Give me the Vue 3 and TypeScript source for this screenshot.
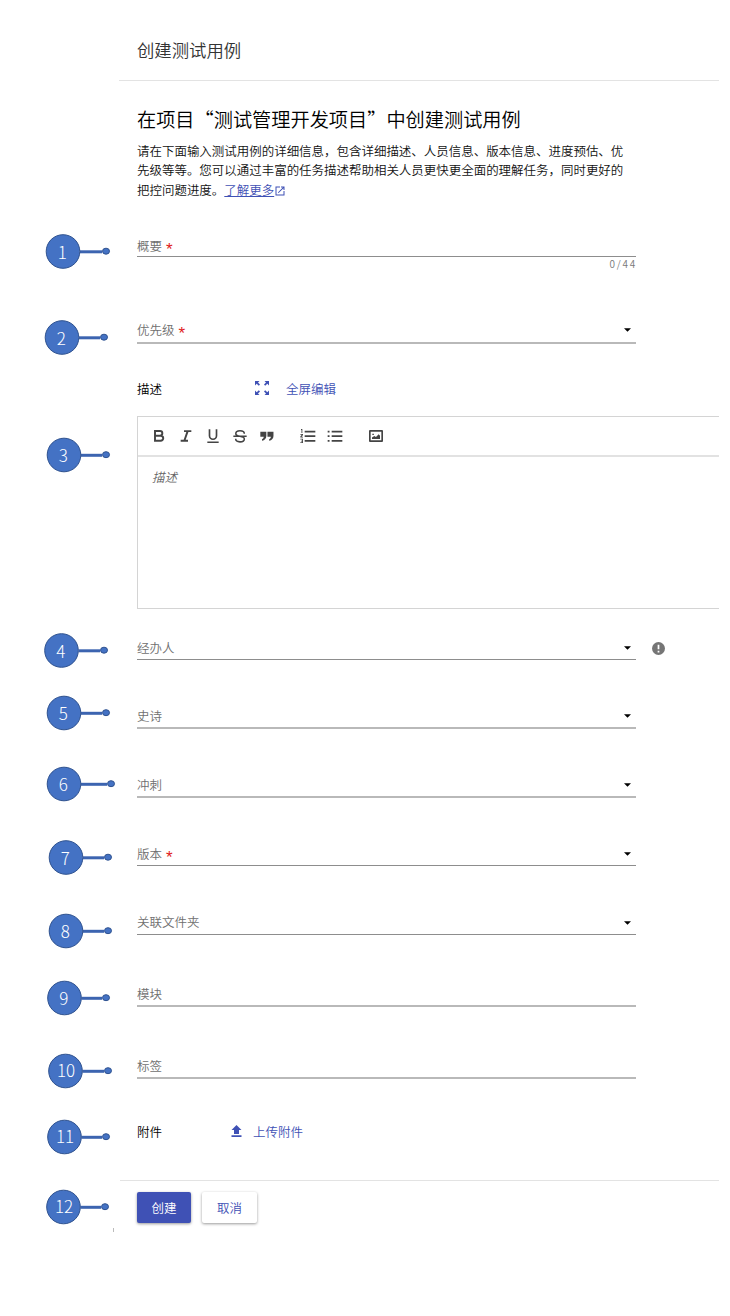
<script setup lang="ts">
interface Field {
  label: string
  required?: boolean
  select?: boolean
  info?: boolean
  counter?: string
  soft?: boolean
  name: string
}
interface Callout {
  n: number
  cx: number
  cy: number
  dot: number
}

const basics: Field[] = [
  { label: '概要', required: true, counter: '0/44', name: 'summary' },
  { label: '优先级', required: true, select: true, soft: true, name: 'priority' },
]
const details: Field[] = [
  { label: '经办人', select: true, info: true, name: 'assignee' },
  { label: '史诗', select: true, soft: true, name: 'epic' },
  { label: '冲刺', select: true, soft: true, name: 'sprint' },
  { label: '版本', required: true, select: true, name: 'version' },
  { label: '关联文件夹', select: true, name: 'folder' },
  { label: '模块', soft: true, name: 'module' },
  { label: '标签', soft: true, name: 'tag' },
]
const callouts: Callout[] = [
  { n: 1, cx: 63, cy: 251.5, dot: 106 },
  { n: 2, cx: 62, cy: 337.5, dot: 104 },
  { n: 3, cx: 64, cy: 455, dot: 106 },
  { n: 4, cx: 61.5, cy: 650.5, dot: 104 },
  { n: 5, cx: 64, cy: 713, dot: 106 },
  { n: 6, cx: 64, cy: 784, dot: 111 },
  { n: 7, cx: 66, cy: 857.5, dot: 108 },
  { n: 8, cx: 66, cy: 931, dot: 108 },
  { n: 9, cx: 64.5, cy: 998, dot: 106 },
  { n: 10, cx: 65.5, cy: 1071, dot: 108 },
  { n: 11, cx: 64.5, cy: 1137, dot: 106 },
  { n: 12, cx: 63.5, cy: 1207, dot: 105 },
]
const tools: { name: string; d: string }[] = [
  { name: 'bold', d: 'M6 4.500h7.500a3.500 3.500 0 0 1 0 7H6zM6 11.500h8.500a3.800 3.800 0 0 1 0 7.700H6z' },
  { name: 'italic', d: 'M9 4.700h11M4 19.200h11M14.500 4.700l-5 14.500' },
]
</script>

<template>
  <div class="page" lang="zh-CN">
    <header class="top"><h1>创建测试用例</h1></header>

    <section class="intro">
      <h2>在项目“测试管理开发项目”中创建测试用例</h2>
      <p>
        请在下面输入测试用例的详细信息，包含详细描述、人员信息、版本信息、进度预估、优<br />先级等等。您可以通过丰富的任务描述帮助相关人员更快更全面的理解任务，同时更好的<br />把控问题进度。<a class="more">了解更多</a><svg class="open" viewBox="0 0 24 24"><path d="M19 19H5V5h7V3H3v18h18v-9h-2zM14 3v2h3.600l-9.800 9.800 1.400 1.400L19 6.400V10h2V3z" /></svg>
      </p>
    </section>

    <div v-for="f in basics" :key="f.name" class="field" :class="[f.name, { soft: f.soft }]">
      <span class="label">{{ f.label }}<b v-if="f.required">*</b></span>
      <svg v-if="f.select" class="caret" viewBox="0 0 8 4"><path d="M0 0h8L4 4z" /></svg>
      <span v-if="f.counter" class="counter">{{ f.counter }}</span>
    </div>

    <div class="desc-head">
      <span class="name">描述</span>
      <svg class="expand" viewBox="0 0 16 16">
        <path d="M1 1h4.500L4 2.500 6 4.500 4.800 5.800 2.700 3.700 1 5.500zM15 1v4.500l-1.700-1.700-2.100 2L10 4.500l2-2L10.500 1zM1 15v-4.500l1.700 1.700 2.100-2L6 11.500l-2 2L5.500 15zM15 15h-4.500l1.500-1.500-2-2 1.200-1.300 2.100 2 1.700-1.700z" />
      </svg>
      <span class="link">全屏编辑</span>
    </div>

    <div class="editor">
      <div class="toolbar">
        <svg v-for="t in tools" :key="t.name" class="tool stroke" viewBox="0 0 24 24"><path :d="t.d" /></svg>
        <svg class="tool" viewBox="0 0 24 24"><path d="M12 18c3.700 0 6.500-2.700 6.500-6.300V2H16v9.700a4 4 0 0 1-8 0V2H5.500v9.700C5.500 15.300 8.300 18 12 18zM3.500 20.400v2h17v-2z" /></svg>
        <svg class="tool thin" viewBox="0 0 24 24"><path d="M2 12.500h20M18.500 8.500c0-2.700-2.500-4.500-6.500-4.500S5.700 5.800 5.700 8.500c0 2 2 3.200 6.300 4 4.500.9 6.500 2 6.500 4 0 2.700-2.500 4.300-6.500 4.300s-6.500-1.800-6.500-4.500" /></svg>
        <svg class="tool" viewBox="0 0 24 24"><path d="M2 5.500h9V12c0 3.600-2.300 6.300-6.500 7.200v-2.500c1.700-.6 2.600-2 2.600-3.700H2zM12.700 5.500h9V12c0 3.600-2.300 6.300-6.500 7.200v-2.500c1.700-.6 2.600-2 2.600-3.700h-5.100z" /></svg>
        <svg class="tool list gap" viewBox="0 0 24 24">
          <path d="M7 4h16v2.600H7zM7 11h16v2.600H7zM7 18h16v2.600H7zM1.500 1.500h2v6H2.200v-4.500h-.7zM.5 9h4v1.500L2.400 13h2.100v1.200h-4v-1.300L2.700 10.200H.5zM.5 16h4v6.500h-4v-1.200h2.700v-1H1.500v-1.200h1.700v-1.800H.5z" />
        </svg>
        <svg class="tool list" viewBox="0 0 24 24">
          <path d="M7 4h16v2.600H7zM7 11h16v2.600H7zM7 18h16v2.600H7zM1 4h2.800v2.600H1zM1 11h2.800v2.600H1zM1 18h2.800v2.600H1z" />
        </svg>
        <svg class="tool gap2" viewBox="0 0 24 24">
          <path fill-rule="evenodd" d="M3 3h18a1.500 1.500 0 0 1 1.500 1.500v15A1.500 1.500 0 0 1 21 21H3a1.500 1.500 0 0 1-1.500-1.500v-15A1.500 1.500 0 0 1 3 3zm1 2.600v12.800h16V5.600zM6 16.500v-2.300l3.500-2.200 2.500 1.500L16 9.500l2 2v5zM6.500 8.500h2.300v2H6.500z" />
        </svg>
      </div>
      <div class="placeholder">描述</div>
    </div>

    <div v-for="f in details" :key="f.name" class="field" :class="[f.name, { soft: f.soft }]">
      <span class="label">{{ f.label }}<b v-if="f.required">*</b></span>
      <svg v-if="f.select" class="caret" viewBox="0 0 8 4"><path d="M0 0h8L4 4z" /></svg>
      <svg v-if="f.info" class="info" viewBox="0 0 12 12">
        <circle cx="6" cy="6" r="6" /><path d="M5.200 2.500h1.600v4.300H5.200zM5.200 8h1.600v1.600H5.200z" />
      </svg>
    </div>

    <div class="attach">
      <span class="name">附件</span>
      <svg class="upload" viewBox="0 0 10 12"><path d="M5 0l5 5H7.500v4h-5V5H0zM0 10.300h10V12H0z" /></svg>
      <span class="link">上传附件</span>
    </div>

    <footer class="actions">
      <button class="primary">创建</button>
      <button class="plain">取消</button>
    </footer>

    <svg class="callouts" viewBox="0 0 130 1316">
      <g v-for="c in callouts" :key="c.n">
        <line :x1="c.cx + 17" :x2="c.dot - 4" :y1="c.cy + 0.3" :y2="c.cy + 0.3" />
        <circle :cx="c.cx" :cy="c.cy" r="16.800" />
        <ellipse :cx="c.dot" :cy="c.cy - 0.3" rx="3.500" ry="3" />
        <text :x="c.n > 9 ? c.cx + 0.5 : c.cx - 0.8" :y="c.n > 9 ? c.cy + 5.5 : c.cy + 7">{{ c.n }}</text>
      </g>
      <path class="tick" d="M113.500 1228v4" />
    </svg>
  </div>
</template>

<style>
body {
  background: #fff;
}
</style>

<style scoped>
* {
  box-sizing: border-box;
}
.page {
  position: relative;
  width: 730px;
  height: 1316px;
  overflow: hidden;
  padding-right: 11px;
  display: flex;
  flex-direction: column;
  font-family: 'Noto Sans CJK SC', sans-serif;
  font-weight: 350;
  font-size: 12.5px;
  color: #111;
}
.top {
  height: 81px;
  margin-left: 119px;
  padding: 37px 0 0 18px;
  border-bottom: 1px solid #e3e3e3;
}
h1 {
  margin: 0;
  font-size: 17.350px;
  line-height: 26px;
  font-weight: 350;
  color: #333;
}
.intro {
  height: 143px;
  padding: 24px 0 0 137px;
}
h2 {
  margin: 0;
  font-size: 19.200px;
  line-height: 28px;
  font-weight: 350;
  color: #000;
  white-space: nowrap;
}
p {
  margin: 9px 0 0;
  font-size: 12.480px;
  line-height: 19.300px;
  white-space: nowrap;
}
.more {
  color: #3f51b5;
  text-decoration: underline;
  text-underline-offset: 1px;
}
.open {
  width: 12px;
  height: 12px;
  vertical-align: -2.500px;
  fill: #3f51b5;
}
.field {
  position: relative;
  display: flex;
  align-items: flex-end;
  justify-content: space-between;
  width: 499px;
  margin-left: 137px;
  padding-bottom: 2px;
  border-bottom: 1px solid #8d8d8d;
  color: #6f6f6f;
}
.field.soft {
  border-bottom: 2px solid #b9b9b9;
}
.label {
  display: flex;
  line-height: 18px;
}
.label b {
  margin: 4px 0 -4px 4px;
  font-family: 'Liberation Sans', sans-serif;
  font-weight: 400;
  font-size: 17px;
  line-height: 18px;
  color: #e01b1b;
}
.caret {
  width: 7px;
  height: 4px;
  margin: 0 5px 7px 0;
}
.counter {
  position: absolute;
  right: -1px;
  top: 100%;
  padding-top: 1px;
  font-size: 10px;
  line-height: 14px;
  letter-spacing: 1.750px;
  color: #777;
}
.info {
  position: absolute;
  left: 515px;
  bottom: 4px;
  width: 13px;
  height: 13px;
  fill: #757575;
}
.info path {
  fill: #fff;
}
.summary {
  height: 33px;
  padding-bottom: 1px;
}
.priority {
  height: 87px;
}
.priority .label {
  margin-bottom: 1px;
}
.priority .caret {
  margin-bottom: 8px;
}
.desc-head {
  display: flex;
  align-items: flex-start;
  height: 72px;
  padding: 17px 0 0 137px;
  line-height: 56px;
}
.name {
  color: #000;
}
.expand {
  width: 16px;
  height: 16px;
  margin: 19px 0 0 92px;
  fill: #3f51b5;
}
.desc-head .link {
  margin-left: 16px;
}
.link {
  color: #3f51b5;
}
.editor {
  height: 193px;
  margin-left: 137px;
  border: 1px solid #d4d4d4;
  border-right: 0;
}
.toolbar {
  display: flex;
  align-items: center;
  gap: 11px;
  height: 40px;
  padding-left: 13px;
  border-bottom: 2px solid #e2e2e2;
}
.tool {
  width: 16px;
  height: 16px;
  fill: #444;
}
.tool.stroke,
.tool.thin {
  fill: none;
  stroke: #444;
  stroke-width: 2.900;
}
.tool.thin {
  stroke-width: 2.300;
}
.tool.gap,
.tool.gap2 {
  margin-left: 14px;
}
.placeholder {
  padding: 11px 0 0 14px;
  line-height: 18px;
  font-style: italic;
  color: #666;
}
.assignee {
  height: 51px;
}
.epic,
.sprint {
  height: 69px;
}
.version {
  height: 68px;
}
.folder {
  height: 69px;
  padding-bottom: 3px;
}
.folder .caret {
  margin-bottom: 6px;
}
.module,
.tag {
  height: 72px;
}
.attach {
  display: flex;
  align-items: center;
  height: 101px;
  padding: 4px 0 0 137px;
}
.upload {
  width: 11px;
  height: 12px;
  margin: 0 11px 1px 69px;
  fill: #3f51b5;
}
.actions {
  display: flex;
  gap: 11px;
  margin-left: 120px;
  padding: 11px 0 0 17px;
  border-top: 1px solid #e3e3e3;
}
button {
  height: 31px;
  padding: 0;
  border: 0;
  border-radius: 2px;
  font: inherit;
  box-shadow: 0 1px 3px rgba(0, 0, 0, 0.4);
}
.primary {
  width: 54px;
  background: #3f51b5;
  color: #fff;
}
.plain {
  width: 55px;
  background: #fff;
  color: #3f51b5;
}
.callouts {
  position: absolute;
  left: 0;
  top: 0;
  width: 130px;
  height: 1316px;
}
.callouts line {
  stroke: #3c64b0;
  stroke-width: 3;
}
.callouts circle,
.callouts ellipse {
  fill: #4472c4;
  stroke: #2f528f;
  stroke-width: 1;
}
.callouts text {
  fill: #fff;
  font-size: 17px;
  font-weight: 300;
  text-anchor: middle;
}
.callouts .tick {
  stroke: #bbb;
}
</style>
